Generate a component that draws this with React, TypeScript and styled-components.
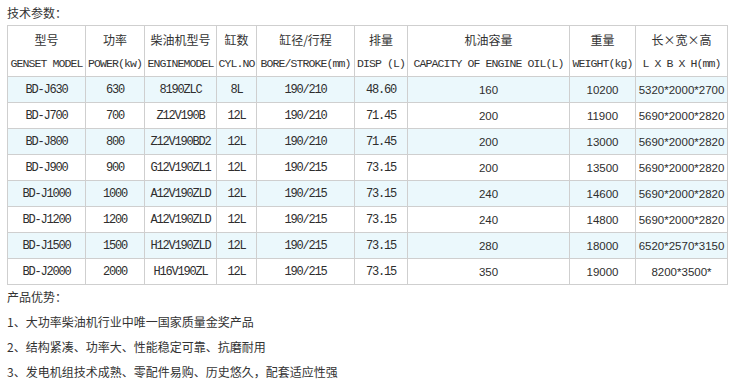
import React from 'react';
import styled, { createGlobalStyle } from 'styled-components';

const GlobalStyle = createGlobalStyle`
  body {
    margin: 0;
    background: #ffffff;
    color: #333333;
    font-family: "Noto Sans CJK SC", "Liberation Sans", sans-serif;
    font-size: 12px;
  }
`;

const Page = styled.div`
  padding: 0 0 0 7px;
`;

const Heading = styled.div`
  height: 25px;
  line-height: 25px;
  font-size: 12px;
`;

const SpecTable = styled.table`
  border-collapse: collapse;
  table-layout: fixed;
  width: 721px;
`;

const HeadCell = styled.th`
  border: 1px solid #cfcfcf;
  height: 50px;
  padding: 0;
  font-weight: normal;
  text-align: center;
  vertical-align: middle;
  white-space: nowrap;
  overflow: hidden;
`;

const HeadCn = styled.div`
  line-height: 25px;
  font-size: 12px;
`;

const HeadEn = styled.div`
  line-height: 23px;
  font-family: "Liberation Mono", monospace;
  font-size: 11.5px;
  letter-spacing: -0.9px;
`;

const Row = styled.tr<{ $tinted: boolean }>`
  height: 26px;
  background: ${props => (props.$tinted ? '#ebf8fc' : '#ffffff')};
`;

const Cell = styled.td<{ $sans?: boolean }>`
  border: 1px solid #cfcfcf;
  padding: 0;
  text-align: center;
  vertical-align: middle;
  white-space: nowrap;
  overflow: hidden;
  color: #2e2e2e;
  font-family: ${props => (props.$sans ? '"Liberation Sans", sans-serif' : '"Liberation Mono", monospace')};
  font-size: ${props => (props.$sans ? '11.5px' : '12px')};
  letter-spacing: ${props => (props.$sans ? '0' : '-1.2px')};
`;

const Notes = styled.div`
  font-size: 12px;
`;

const NoteTitle = styled.div`
  height: 24px;
  line-height: 24px;
`;

const NoteLine = styled.div`
  height: 25px;
  line-height: 25px;
`;

const columns = [
  { width: 78, cn: '型号', en: 'GENSET MODEL' },
  { width: 59, cn: '功率', en: 'POWER(kw)' },
  { width: 72, cn: '柴油机型号', en: 'ENGINEMODEL' },
  { width: 40, cn: '缸数', en: 'CYL.NO' },
  { width: 98, cn: '缸径/行程', en: 'BORE/STROKE(mm)' },
  { width: 53, cn: '排量', en: 'DISP (L)' },
  { width: 162, cn: '机油容量', en: 'CAPACITY OF ENGINE OIL(L)' },
  { width: 66, cn: '重量', en: 'WEIGHT(kg)' },
  { width: 92, cn: '长×宽×高', en: 'L X B X H(mm)' },
];

const rows = [
  ['BD-J630', '630', '8190ZLC', '8L', '190/210', '48.60', '160', '10200', '5320*2000*2700'],
  ['BD-J700', '700', 'Z12V190B', '12L', '190/210', '71.45', '200', '11900', '5690*2000*2820'],
  ['BD-J800', '800', 'Z12V190BD2', '12L', '190/210', '71.45', '200', '13000', '5690*2000*2820'],
  ['BD-J900', '900', 'G12V190ZL1', '12L', '190/215', '73.15', '200', '13500', '5690*2000*2820'],
  ['BD-J1000', '1000', 'A12V190ZLD', '12L', '190/215', '73.15', '240', '14600', '5690*2000*2820'],
  ['BD-J1200', '1200', 'A12V190ZLD', '12L', '190/215', '73.15', '240', '14800', '5690*2000*2820'],
  ['BD-J1500', '1500', 'H12V190ZLD', '12L', '190/215', '73.15', '280', '18000', '6520*2570*3150'],
  ['BD-J2000', '2000', 'H16V190ZL', '12L', '190/215', '73.15', '350', '19000', '8200*3500*'],
];

const advantages = [
  '1、大功率柴油机行业中唯一国家质量金奖产品',
  '2、结构紧凑、功率大、性能稳定可靠、抗磨耐用',
  '3、发电机组技术成熟、零配件易购、历史悠久，配套适应性强',
];

const App: React.FC = () => (
  <Page>
    <GlobalStyle />
    <Heading>技术参数：</Heading>
    <SpecTable>
      <colgroup>
        {columns.map((col, i) => (
          <col key={i} style={{ width: col.width }} />
        ))}
      </colgroup>
      <thead>
        <tr>
          {columns.map((col, i) => (
            <HeadCell key={i}>
              <HeadCn>{col.cn}</HeadCn>
              <HeadEn>{col.en}</HeadEn>
            </HeadCell>
          ))}
        </tr>
      </thead>
      <tbody>
        {rows.map((row, r) => (
          <Row key={r} $tinted={r % 2 === 0}>
            {row.map((value, c) => (
              <Cell key={c} $sans={c >= 6}>
                {value}
              </Cell>
            ))}
          </Row>
        ))}
      </tbody>
    </SpecTable>
    <Notes>
      <NoteTitle>产品优势：</NoteTitle>
      {advantages.map((line, i) => (
        <NoteLine key={i}>{line}</NoteLine>
      ))}
    </Notes>
  </Page>
);

export default App;
